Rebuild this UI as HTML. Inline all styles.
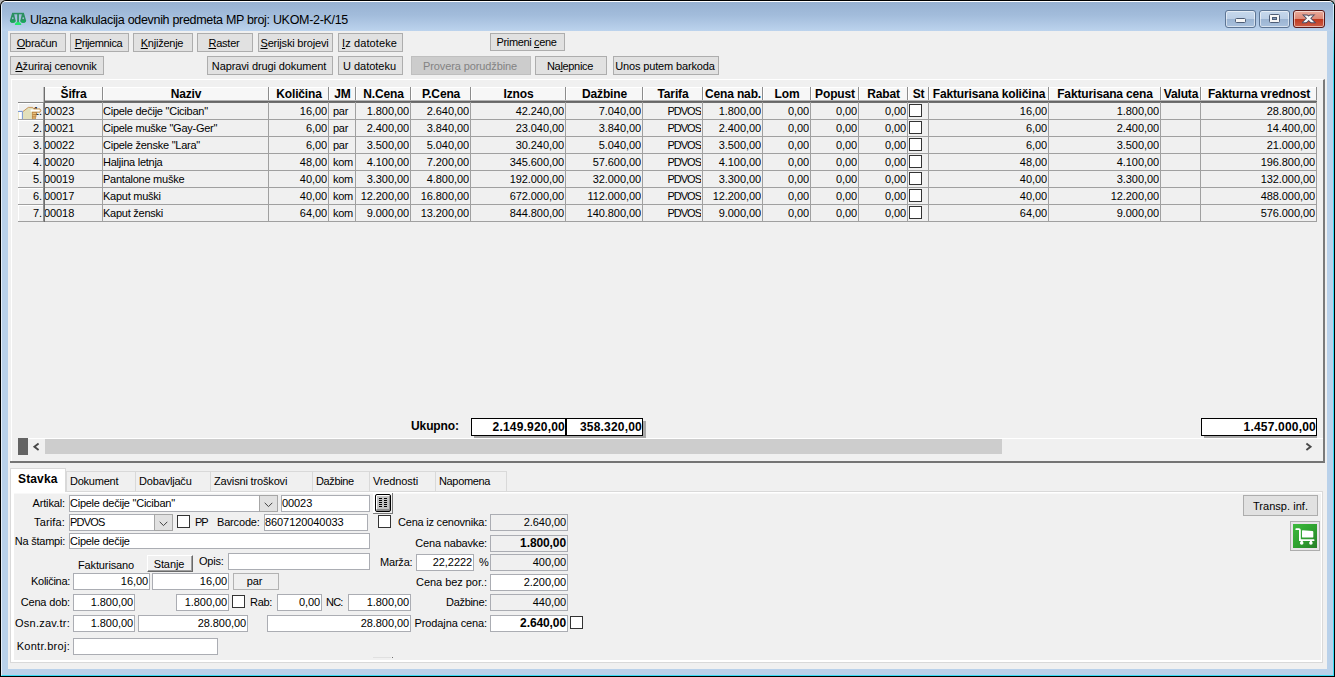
<!DOCTYPE html><html lang="sr"><head><meta charset="utf-8"><title>Ulazna kalkulacija odevnih predmeta</title><style>
*{box-sizing:border-box;margin:0;padding:0}
html,body{width:1335px;height:677px;overflow:hidden;background:#b4b4b4}
body{position:relative;font-family:"Liberation Sans",sans-serif;font-size:11px;color:#000}
.a{position:absolute;white-space:nowrap;overflow:hidden}
.t{position:absolute;white-space:nowrap;line-height:16px;height:16px;font-size:11px;letter-spacing:-0.25px}
u{text-decoration:underline;text-underline-offset:1px}
#win{left:0;top:0;width:1335px;height:677px;background:#000;border-radius:6px 6px 0 0}
#client{left:8px;top:31px;width:1319px;height:638px;background:#f0f0f0}
.btn{position:absolute;background:#e1e1e1;border:1px solid #adadad;text-align:center;white-space:nowrap;line-height:19px;height:19px;font-size:11px;letter-spacing:-0.2px;overflow:hidden;padding-right:2px}
.dis{background:#cccccc;border-color:#bfbfbf;color:#838383}
.in{position:absolute;background:#fff;border:1px solid #abadb3;white-space:nowrap;overflow:hidden;line-height:14px;height:16px;font-size:11px;letter-spacing:-0.25px;padding:0}
.ro{background:#f0f0f0}
.cb{position:absolute;width:13px;height:13px;background:#fff;border:1px solid #333}
.gl{position:absolute;background:#a0a0a0}
.hd{position:absolute;top:87px;height:14px;background:#f7f7f7;border-left:1px solid #fff;border-top:1px solid #fff;font-weight:bold;text-align:center;font-size:12px;letter-spacing:-0.15px;line-height:13px;white-space:nowrap;overflow:visible}
.cell{position:absolute;height:16px;line-height:16px;font-size:11px;white-space:nowrap;overflow:hidden;letter-spacing:-0.25px}
.tab{position:absolute;top:471px;height:20px;border:1px solid #d9d9d9;border-bottom:none;border-right:none;background:#f0f0f0;line-height:18px;font-size:11px;letter-spacing:-0.2px;padding-left:3px;white-space:nowrap}
.n{letter-spacing:-0.08px}
.r{text-align:right}
.c{text-align:center}
.b{font-weight:bold;font-size:12px;letter-spacing:-0.1px}
.in.r{padding-right:1px}
.pd{letter-spacing:-0.8px}
</style></head><body>
<div id="win" class="a">
<div class="a" style="left:1px;top:1px;width:1333px;height:675px;border-radius:5px 5px 0 0;background:#b9d1ea;border:1px solid #fff;border-left-color:#e6eff9;border-bottom-color:#38dcf5;border-right-color:#38dcf5"></div>
<div class="a" style="left:1333px;top:4px;width:1px;height:60px;background:linear-gradient(#dbeefa,#9fe3f6 40%,#38dcf5)"></div>
<div class="a" style="left:2px;top:2px;width:1331px;height:29px;border-radius:4px 4px 0 0;background:linear-gradient(#98b2d2,#a2bcdb 45%,#bcd3ed 100%)"></div>
</div>
<svg class="a" style="left:9px;top:12px" width="18" height="14" viewBox="0 0 18 14"><g fill="#2b9060"><rect x="3" y="0.8" width="12" height="1.5"/><rect x="8.2" y="1" width="1.7" height="9.6"/><path d="M3 1.2 L4.9 1.2 L6.6 8.6 Q6.6 10.7 3.8 10.7 Q0.9 10.7 0.9 8.6 Z"/><path d="M15 1.2 L13.1 1.2 L11.4 8.6 Q11.4 10.7 14.2 10.7 Q17.1 10.7 17.1 8.6 Z"/></g><path d="M1 8.4 H6.6 Q6.6 10.7 3.8 10.7 Q0.9 10.7 1 8.4Z M11.4 8.4 H17 Q17.1 10.7 14.2 10.7 Q11.4 10.7 11.4 8.4Z" fill="#1aa85a"/><ellipse cx="3.8" cy="6.2" rx="0.8" ry="1" fill="#a9c1dd"/><ellipse cx="14.2" cy="6.2" rx="0.8" ry="1" fill="#a9c1dd"/><path d="M5.9 13 Q5.9 10 9 10 Q12.3 10 12.3 13 Z" fill="#22e56c"/></svg>
<div class="t" style="left:30px;top:12px;font-size:12.5px;letter-spacing:-0.31px;line-height:16px">Ulazna kalkulacija odevnih predmeta MP broj: UKOM-2-K/15</div>
<div class="a" style="left:1225px;top:10px;width:31px;height:18px;border:1px solid #5d7594;border-radius:3px;background:linear-gradient(#c6d8ec 0%,#bccfe6 48%,#9bb4d2 52%,#a9c1dd 100%);box-shadow:inset 0 0 0 1px rgba(255,255,255,.55)">
<div class="a" style="left:9px;top:7px;width:11px;height:5px;background:#f6f6f6;border:1px solid #4d5d76;border-radius:1.5px"></div>
</div>
<div class="a" style="left:1259px;top:10px;width:31px;height:18px;border:1px solid #5d7594;border-radius:3px;background:linear-gradient(#c6d8ec 0%,#bccfe6 48%,#9bb4d2 52%,#a9c1dd 100%);box-shadow:inset 0 0 0 1px rgba(255,255,255,.55)">
<div class="a" style="left:9px;top:3px;width:11px;height:9px;background:#f6f6f6;border:1px solid #4d5d76;border-radius:1.5px"></div><div class="a" style="left:12px;top:6px;width:5px;height:3px;background:#7f97b8;border:1px solid #4d5d76"></div>
</div>
<div class="a" style="left:1293px;top:10px;width:32px;height:18px;border:1px solid #5a1a1a;border-radius:3px;background:linear-gradient(#e9aa9b 0%,#dd8a77 48%,#c0391f 52%,#cc5e47 100%);box-shadow:inset 0 0 0 1px rgba(255,255,255,.55)">
<svg class="a" style="left:8px;top:2px" width="14" height="12" viewBox="0 -1 14 12"><defs><clipPath id="cxo"><rect x="0" y="0.5" width="14" height="8.7"/></clipPath><clipPath id="cxi"><rect x="0" y="1.4" width="14" height="6.9"/></clipPath></defs><g fill="none"><path clip-path="url(#cxo)" d="M0.6 -1.8 L12.7 10.4 M12.7 -1.8 L0.6 10.4" stroke="#4a4a60" stroke-width="4"/><path clip-path="url(#cxi)" d="M0.6 -1.8 L12.7 10.4 M12.7 -1.8 L0.6 10.4" stroke="#f8f8f8" stroke-width="2.3"/></g></svg>
</div>
<div id="client" class="a"></div>
<div class="btn " style="left:10px;top:33px;width:56px;letter-spacing:-0.26px;"><u>O</u>bračun</div>
<div class="btn " style="left:70px;top:33px;width:59px;letter-spacing:-0.38px;"><u>P</u>rijemnica</div>
<div class="btn " style="left:133px;top:33px;width:60px;letter-spacing:-0.24px;"><u>K</u>njiženje</div>
<div class="btn " style="left:197px;top:33px;width:56px;letter-spacing:-0.23px;"><u>R</u>aster</div>
<div class="btn " style="left:258px;top:33px;width:75px;letter-spacing:-0.18px;"><u>S</u>erijski brojevi</div>
<div class="btn " style="left:338px;top:33px;width:65px;letter-spacing:0.11px;"><u>I</u>z datoteke</div>
<div class="btn " style="left:490px;top:33px;width:75px;height:18px;line-height:17px;letter-spacing:-0.35px;">Primeni <u>c</u>ene</div>
<div class="btn " style="left:10px;top:56px;width:94px;letter-spacing:-0.15px;"><u>A</u>žuriraj cenovnik</div>
<div class="btn " style="left:207px;top:56px;width:126px;letter-spacing:-0.11px;">Napravi drugi dokument</div>
<div class="btn " style="left:338px;top:56px;width:65px;letter-spacing:-0.02px;">U datoteku</div>
<div class="btn dis" style="left:411px;top:56px;width:120px;letter-spacing:-0.11px;">Provera porudžbine</div>
<div class="btn " style="left:535px;top:56px;width:72px;letter-spacing:-0.32px;">Na<u>l</u>epnice</div>
<div class="btn " style="left:613px;top:56px;width:106px;letter-spacing:-0.14px;">Unos putem barkoda</div>
<div class="a" style="left:10px;top:79px;width:1315px;height:384px;border-top:1px solid #fff;border-right:2px solid #7a7a7a;border-bottom:2px solid #747474"></div>
<div class="a" style="left:11px;top:79px;width:1px;height:382px;background:#fff"></div>
<div class="a" style="left:10px;top:79px;width:1px;height:382px;background:#f0f0f0"></div>
<div class="hd" style="left:44px;width:58px">Šifra</div>
<div class="gl" style="left:102px;top:87px;width:1px;height:15px;background:#8c8c8c"></div>
<div class="hd" style="left:103px;width:165px">Naziv</div>
<div class="gl" style="left:268px;top:87px;width:1px;height:15px;background:#8c8c8c"></div>
<div class="hd" style="left:269px;width:59px">Količina</div>
<div class="gl" style="left:328px;top:87px;width:1px;height:15px;background:#8c8c8c"></div>
<div class="hd" style="left:329px;width:26px">JM</div>
<div class="gl" style="left:355px;top:87px;width:1px;height:15px;background:#8c8c8c"></div>
<div class="hd" style="left:356px;width:54px">N.Cena</div>
<div class="gl" style="left:410px;top:87px;width:1px;height:15px;background:#8c8c8c"></div>
<div class="hd" style="left:411px;width:59px">P.Cena</div>
<div class="gl" style="left:470px;top:87px;width:1px;height:15px;background:#8c8c8c"></div>
<div class="hd" style="left:471px;width:94px">Iznos</div>
<div class="gl" style="left:565px;top:87px;width:1px;height:15px;background:#8c8c8c"></div>
<div class="hd" style="left:566px;width:76px">Dažbine</div>
<div class="gl" style="left:642px;top:87px;width:1px;height:15px;background:#8c8c8c"></div>
<div class="hd" style="left:643px;width:59px">Tarifa</div>
<div class="gl" style="left:702px;top:87px;width:1px;height:15px;background:#8c8c8c"></div>
<div class="hd" style="left:703px;width:59px">Cena nab.</div>
<div class="gl" style="left:762px;top:87px;width:1px;height:15px;background:#8c8c8c"></div>
<div class="hd" style="left:763px;width:47px">Lom</div>
<div class="gl" style="left:810px;top:87px;width:1px;height:15px;background:#8c8c8c"></div>
<div class="hd" style="left:811px;width:47px">Popust</div>
<div class="gl" style="left:858px;top:87px;width:1px;height:15px;background:#8c8c8c"></div>
<div class="hd" style="left:859px;width:48px">Rabat</div>
<div class="gl" style="left:907px;top:87px;width:1px;height:15px;background:#8c8c8c"></div>
<div class="hd" style="left:908px;width:20px">St</div>
<div class="gl" style="left:928px;top:87px;width:1px;height:15px;background:#8c8c8c"></div>
<div class="hd" style="left:929px;width:119px">Fakturisana količina</div>
<div class="gl" style="left:1048px;top:87px;width:1px;height:15px;background:#8c8c8c"></div>
<div class="hd" style="left:1049px;width:111px">Fakturisana cena</div>
<div class="gl" style="left:1160px;top:87px;width:1px;height:15px;background:#8c8c8c"></div>
<div class="hd" style="left:1161px;width:39px">Valuta</div>
<div class="gl" style="left:1200px;top:87px;width:1px;height:15px;background:#8c8c8c"></div>
<div class="hd" style="left:1201px;width:115px">Fakturna vrednost</div>
<div class="gl" style="left:1316px;top:87px;width:1px;height:15px;background:#8c8c8c"></div>
<div class="gl" style="left:44px;top:100px;width:1273px;height:1px;background:#b4b4b4"></div>
<div class="gl" style="left:44px;top:101px;width:1273px;height:1px;background:#666"></div>
<div class="gl" style="left:18px;top:102px;width:26px;height:1px;background:#8a8a8a"></div>
<div class="gl" style="left:44px;top:102px;width:1273px;height:1px;background:#707070"></div>
<div class="cell n r" style="left:18px;top:103px;width:24px">1.</div>
<div class="gl" style="left:18px;top:103px;width:25px;height:1px;background:#fff"></div><div class="gl" style="left:18px;top:103px;width:1px;height:16px;background:#fff"></div>
<div class="cell n" style="left:44px;top:103px;width:58px">00023</div>
<div class="cell" style="left:103px;top:103px;width:165px">Cipele dečije "Ciciban"</div>
<div class="cell n r" style="left:269px;top:103px;width:58px;">16,00</div>
<div class="cell" style="left:333px;top:103px;width:22px">par</div>
<div class="cell n r" style="left:356px;top:103px;width:53px;">1.800,00</div>
<div class="cell n r" style="left:411px;top:103px;width:58px;">2.640,00</div>
<div class="cell n r" style="left:471px;top:103px;width:93px;">42.240,00</div>
<div class="cell n r" style="left:566px;top:103px;width:75px;">7.040,00</div>
<div class="cell r" style="left:643px;top:103px;width:58px;letter-spacing:-1px;">PDVOS</div>
<div class="cell n r" style="left:703px;top:103px;width:58px;">1.800,00</div>
<div class="cell n r" style="left:763px;top:103px;width:46px;">0,00</div>
<div class="cell n r" style="left:811px;top:103px;width:46px;">0,00</div>
<div class="cell n r" style="left:859px;top:103px;width:47px;">0,00</div>
<div class="cb" style="left:909px;top:104px;width:13px;height:13px;border-color:#333"></div>
<div class="cell n r" style="left:929px;top:103px;width:118px;">16,00</div>
<div class="cell n r" style="left:1049px;top:103px;width:110px;">1.800,00</div>
<div class="cell n r" style="left:1201px;top:103px;width:114px;">28.800,00</div>
<div class="gl" style="left:18px;top:119px;width:1299px;height:1px"></div>
<div class="cell n r" style="left:18px;top:120px;width:24px">2.</div>
<div class="gl" style="left:18px;top:120px;width:25px;height:1px;background:#fff"></div><div class="gl" style="left:18px;top:120px;width:1px;height:16px;background:#fff"></div>
<div class="cell n" style="left:44px;top:120px;width:58px">00021</div>
<div class="cell" style="left:103px;top:120px;width:165px">Cipele muške "Gay-Ger"</div>
<div class="cell n r" style="left:269px;top:120px;width:58px;">6,00</div>
<div class="cell" style="left:333px;top:120px;width:22px">par</div>
<div class="cell n r" style="left:356px;top:120px;width:53px;">2.400,00</div>
<div class="cell n r" style="left:411px;top:120px;width:58px;">3.840,00</div>
<div class="cell n r" style="left:471px;top:120px;width:93px;">23.040,00</div>
<div class="cell n r" style="left:566px;top:120px;width:75px;">3.840,00</div>
<div class="cell r" style="left:643px;top:120px;width:58px;letter-spacing:-1px;">PDVOS</div>
<div class="cell n r" style="left:703px;top:120px;width:58px;">2.400,00</div>
<div class="cell n r" style="left:763px;top:120px;width:46px;">0,00</div>
<div class="cell n r" style="left:811px;top:120px;width:46px;">0,00</div>
<div class="cell n r" style="left:859px;top:120px;width:47px;">0,00</div>
<div class="cb" style="left:909px;top:121px;width:13px;height:13px;border-color:#333"></div>
<div class="cell n r" style="left:929px;top:120px;width:118px;">6,00</div>
<div class="cell n r" style="left:1049px;top:120px;width:110px;">2.400,00</div>
<div class="cell n r" style="left:1201px;top:120px;width:114px;">14.400,00</div>
<div class="gl" style="left:18px;top:136px;width:1299px;height:1px"></div>
<div class="cell n r" style="left:18px;top:137px;width:24px">3.</div>
<div class="gl" style="left:18px;top:137px;width:25px;height:1px;background:#fff"></div><div class="gl" style="left:18px;top:137px;width:1px;height:16px;background:#fff"></div>
<div class="cell n" style="left:44px;top:137px;width:58px">00022</div>
<div class="cell" style="left:103px;top:137px;width:165px">Cipele ženske "Lara"</div>
<div class="cell n r" style="left:269px;top:137px;width:58px;">6,00</div>
<div class="cell" style="left:333px;top:137px;width:22px">par</div>
<div class="cell n r" style="left:356px;top:137px;width:53px;">3.500,00</div>
<div class="cell n r" style="left:411px;top:137px;width:58px;">5.040,00</div>
<div class="cell n r" style="left:471px;top:137px;width:93px;">30.240,00</div>
<div class="cell n r" style="left:566px;top:137px;width:75px;">5.040,00</div>
<div class="cell r" style="left:643px;top:137px;width:58px;letter-spacing:-1px;">PDVOS</div>
<div class="cell n r" style="left:703px;top:137px;width:58px;">3.500,00</div>
<div class="cell n r" style="left:763px;top:137px;width:46px;">0,00</div>
<div class="cell n r" style="left:811px;top:137px;width:46px;">0,00</div>
<div class="cell n r" style="left:859px;top:137px;width:47px;">0,00</div>
<div class="cb" style="left:909px;top:138px;width:13px;height:13px;border-color:#333"></div>
<div class="cell n r" style="left:929px;top:137px;width:118px;">6,00</div>
<div class="cell n r" style="left:1049px;top:137px;width:110px;">3.500,00</div>
<div class="cell n r" style="left:1201px;top:137px;width:114px;">21.000,00</div>
<div class="gl" style="left:18px;top:153px;width:1299px;height:1px"></div>
<div class="cell n r" style="left:18px;top:154px;width:24px">4.</div>
<div class="gl" style="left:18px;top:154px;width:25px;height:1px;background:#fff"></div><div class="gl" style="left:18px;top:154px;width:1px;height:16px;background:#fff"></div>
<div class="cell n" style="left:44px;top:154px;width:58px">00020</div>
<div class="cell" style="left:103px;top:154px;width:165px">Haljina letnja</div>
<div class="cell n r" style="left:269px;top:154px;width:58px;">48,00</div>
<div class="cell" style="left:333px;top:154px;width:22px">kom</div>
<div class="cell n r" style="left:356px;top:154px;width:53px;">4.100,00</div>
<div class="cell n r" style="left:411px;top:154px;width:58px;">7.200,00</div>
<div class="cell n r" style="left:471px;top:154px;width:93px;">345.600,00</div>
<div class="cell n r" style="left:566px;top:154px;width:75px;">57.600,00</div>
<div class="cell r" style="left:643px;top:154px;width:58px;letter-spacing:-1px;">PDVOS</div>
<div class="cell n r" style="left:703px;top:154px;width:58px;">4.100,00</div>
<div class="cell n r" style="left:763px;top:154px;width:46px;">0,00</div>
<div class="cell n r" style="left:811px;top:154px;width:46px;">0,00</div>
<div class="cell n r" style="left:859px;top:154px;width:47px;">0,00</div>
<div class="cb" style="left:909px;top:155px;width:13px;height:13px;border-color:#333"></div>
<div class="cell n r" style="left:929px;top:154px;width:118px;">48,00</div>
<div class="cell n r" style="left:1049px;top:154px;width:110px;">4.100,00</div>
<div class="cell n r" style="left:1201px;top:154px;width:114px;">196.800,00</div>
<div class="gl" style="left:18px;top:170px;width:1299px;height:1px"></div>
<div class="cell n r" style="left:18px;top:171px;width:24px">5.</div>
<div class="gl" style="left:18px;top:171px;width:25px;height:1px;background:#fff"></div><div class="gl" style="left:18px;top:171px;width:1px;height:16px;background:#fff"></div>
<div class="cell n" style="left:44px;top:171px;width:58px">00019</div>
<div class="cell" style="left:103px;top:171px;width:165px">Pantalone muške</div>
<div class="cell n r" style="left:269px;top:171px;width:58px;">40,00</div>
<div class="cell" style="left:333px;top:171px;width:22px">kom</div>
<div class="cell n r" style="left:356px;top:171px;width:53px;">3.300,00</div>
<div class="cell n r" style="left:411px;top:171px;width:58px;">4.800,00</div>
<div class="cell n r" style="left:471px;top:171px;width:93px;">192.000,00</div>
<div class="cell n r" style="left:566px;top:171px;width:75px;">32.000,00</div>
<div class="cell r" style="left:643px;top:171px;width:58px;letter-spacing:-1px;">PDVOS</div>
<div class="cell n r" style="left:703px;top:171px;width:58px;">3.300,00</div>
<div class="cell n r" style="left:763px;top:171px;width:46px;">0,00</div>
<div class="cell n r" style="left:811px;top:171px;width:46px;">0,00</div>
<div class="cell n r" style="left:859px;top:171px;width:47px;">0,00</div>
<div class="cb" style="left:909px;top:172px;width:13px;height:13px;border-color:#333"></div>
<div class="cell n r" style="left:929px;top:171px;width:118px;">40,00</div>
<div class="cell n r" style="left:1049px;top:171px;width:110px;">3.300,00</div>
<div class="cell n r" style="left:1201px;top:171px;width:114px;">132.000,00</div>
<div class="gl" style="left:18px;top:187px;width:1299px;height:1px"></div>
<div class="cell n r" style="left:18px;top:188px;width:24px">6.</div>
<div class="gl" style="left:18px;top:188px;width:25px;height:1px;background:#fff"></div><div class="gl" style="left:18px;top:188px;width:1px;height:16px;background:#fff"></div>
<div class="cell n" style="left:44px;top:188px;width:58px">00017</div>
<div class="cell" style="left:103px;top:188px;width:165px">Kaput muški</div>
<div class="cell n r" style="left:269px;top:188px;width:58px;">40,00</div>
<div class="cell" style="left:333px;top:188px;width:22px">kom</div>
<div class="cell n r" style="left:356px;top:188px;width:53px;">12.200,00</div>
<div class="cell n r" style="left:411px;top:188px;width:58px;">16.800,00</div>
<div class="cell n r" style="left:471px;top:188px;width:93px;">672.000,00</div>
<div class="cell n r" style="left:566px;top:188px;width:75px;">112.000,00</div>
<div class="cell r" style="left:643px;top:188px;width:58px;letter-spacing:-1px;">PDVOS</div>
<div class="cell n r" style="left:703px;top:188px;width:58px;">12.200,00</div>
<div class="cell n r" style="left:763px;top:188px;width:46px;">0,00</div>
<div class="cell n r" style="left:811px;top:188px;width:46px;">0,00</div>
<div class="cell n r" style="left:859px;top:188px;width:47px;">0,00</div>
<div class="cb" style="left:909px;top:189px;width:13px;height:13px;border-color:#333"></div>
<div class="cell n r" style="left:929px;top:188px;width:118px;">40,00</div>
<div class="cell n r" style="left:1049px;top:188px;width:110px;">12.200,00</div>
<div class="cell n r" style="left:1201px;top:188px;width:114px;">488.000,00</div>
<div class="gl" style="left:18px;top:204px;width:1299px;height:1px"></div>
<div class="cell n r" style="left:18px;top:205px;width:24px">7.</div>
<div class="gl" style="left:18px;top:205px;width:25px;height:1px;background:#fff"></div><div class="gl" style="left:18px;top:205px;width:1px;height:16px;background:#fff"></div>
<div class="cell n" style="left:44px;top:205px;width:58px">00018</div>
<div class="cell" style="left:103px;top:205px;width:165px">Kaput ženski</div>
<div class="cell n r" style="left:269px;top:205px;width:58px;">64,00</div>
<div class="cell" style="left:333px;top:205px;width:22px">kom</div>
<div class="cell n r" style="left:356px;top:205px;width:53px;">9.000,00</div>
<div class="cell n r" style="left:411px;top:205px;width:58px;">13.200,00</div>
<div class="cell n r" style="left:471px;top:205px;width:93px;">844.800,00</div>
<div class="cell n r" style="left:566px;top:205px;width:75px;">140.800,00</div>
<div class="cell r" style="left:643px;top:205px;width:58px;letter-spacing:-1px;">PDVOS</div>
<div class="cell n r" style="left:703px;top:205px;width:58px;">9.000,00</div>
<div class="cell n r" style="left:763px;top:205px;width:46px;">0,00</div>
<div class="cell n r" style="left:811px;top:205px;width:46px;">0,00</div>
<div class="cell n r" style="left:859px;top:205px;width:47px;">0,00</div>
<div class="cb" style="left:909px;top:206px;width:13px;height:13px;border-color:#333"></div>
<div class="cell n r" style="left:929px;top:205px;width:118px;">64,00</div>
<div class="cell n r" style="left:1049px;top:205px;width:110px;">9.000,00</div>
<div class="cell n r" style="left:1201px;top:205px;width:114px;">576.000,00</div>
<div class="gl" style="left:18px;top:221px;width:1299px;height:1px"></div>
<div class="gl" style="left:43px;top:87px;width:1px;height:15px;background:#bdbdbd"></div>
<div class="gl" style="left:43px;top:102px;width:1px;height:120px;background:#8e8e8e"></div>
<div class="gl" style="left:44px;top:87px;width:1px;height:135px;background:#6e6e6e"></div>
<div class="gl" style="left:102px;top:102px;width:1px;height:120px"></div>
<div class="gl" style="left:268px;top:102px;width:1px;height:120px"></div>
<div class="gl" style="left:328px;top:102px;width:1px;height:120px"></div>
<div class="gl" style="left:355px;top:102px;width:1px;height:120px"></div>
<div class="gl" style="left:410px;top:102px;width:1px;height:120px"></div>
<div class="gl" style="left:470px;top:102px;width:1px;height:120px"></div>
<div class="gl" style="left:565px;top:102px;width:1px;height:120px"></div>
<div class="gl" style="left:642px;top:102px;width:1px;height:120px"></div>
<div class="gl" style="left:702px;top:102px;width:1px;height:120px"></div>
<div class="gl" style="left:762px;top:102px;width:1px;height:120px"></div>
<div class="gl" style="left:810px;top:102px;width:1px;height:120px"></div>
<div class="gl" style="left:858px;top:102px;width:1px;height:120px"></div>
<div class="gl" style="left:907px;top:102px;width:1px;height:120px"></div>
<div class="gl" style="left:928px;top:102px;width:1px;height:120px"></div>
<div class="gl" style="left:1048px;top:102px;width:1px;height:120px"></div>
<div class="gl" style="left:1160px;top:102px;width:1px;height:120px"></div>
<div class="gl" style="left:1200px;top:102px;width:1px;height:120px"></div>
<div class="gl" style="left:1316px;top:102px;width:1px;height:120px"></div>
<svg class="a" style="left:18px;top:104px" width="26" height="15" viewBox="0 0 26 15"><rect x="0" y="7.4" width="4.4" height="7.6" fill="#fff"/><rect x="0" y="7.9" width="1" height="7.1" fill="#ebe7c6"/><path d="M0 7.4 H4.4 V15" fill="none" stroke="#6a8fd0" stroke-width="1"/><path d="M4.9 7.6 L10.3 3.4 H14.8 L15.6 4.9 H22 Q23.5 6.5 22 8.2 H14.4 V15 H4.9 Z" fill="#e2e0bb"/><rect x="12.6" y="5.4" width="9" height="2.2" fill="#fff"/><path d="M4.9 7.6 L10.3 3.4 H14.8 L15.6 4.9 H22 Q23.6 6.5 22 8.2 H14.2" fill="none" stroke="#c48c4c" stroke-width="0.9"/><g fill="#e9c27c" stroke="#b9813d" stroke-width="0.7"><rect x="14.3" y="8.5" width="4.2" height="2"/><rect x="14.3" y="10.8" width="3.7" height="2"/><rect x="14.3" y="13.1" width="3.2" height="1.9"/></g></svg>
<div class="t b" style="left:411px;top:418px">Ukupno:</div>
<div class="a" style="left:474px;top:421px;width:95px;height:17px;background:#a8a8a8"></div>
<div class="a b r" style="left:471px;top:418px;width:95px;height:18px;background:#fff;border:1px solid #000;line-height:17px;font-size:12px;letter-spacing:0.2px;padding-right:0">2.149.920,00</div>
<div class="a" style="left:569px;top:421px;width:77px;height:17px;background:#a8a8a8"></div>
<div class="a b r" style="left:566px;top:418px;width:77px;height:18px;background:#fff;border:1px solid #000;line-height:17px;font-size:12px;letter-spacing:0.2px;padding-right:0">358.320,00</div>
<div class="a" style="left:1204px;top:421px;width:113px;height:17px;background:#a8a8a8"></div>
<div class="a b r" style="left:1201px;top:418px;width:116px;height:18px;background:#fff;border:1px solid #000;line-height:17px;font-size:12px;letter-spacing:0.2px;padding-right:0">1.457.000,00</div>
<div class="a" style="left:28px;top:438px;width:1295px;height:1px;background:#fff"></div>
<div class="a" style="left:18px;top:438px;width:10px;height:17px;background:#646464"></div>
<div class="a" style="left:45px;top:439px;width:957px;height:15px;background:#cdcdcd"></div>
<svg class="a" style="left:32px;top:442px" width="8" height="10" viewBox="0 0 8 10"><path d="M6.6 1.4 L2.4 4.7 L6.6 8" fill="none" stroke="#484848" stroke-width="1.9"/></svg>
<svg class="a" style="left:1305px;top:442px" width="8" height="10" viewBox="0 0 8 10"><path d="M1.4 1.4 L5.6 4.7 L1.4 8" fill="none" stroke="#484848" stroke-width="1.9"/></svg>
<div class="a" style="left:10px;top:491px;width:1313px;height:172px;border:1px solid #d9d9d9;background:#fff"></div>
<div class="a" style="left:14px;top:493px;width:1307px;height:167px;background:#f0f0f0;border-top:1px solid #f8f8f8"></div>
<div class="tab" style="left:66px;width:69px;letter-spacing:-0.23px;">Dokument</div>
<div class="tab" style="left:135px;width:75px;letter-spacing:-0.18px;">Dobavljaču</div>
<div class="tab" style="left:210px;width:102px;letter-spacing:-0.16px;">Zavisni troškovi</div>
<div class="tab" style="left:312px;width:57px;letter-spacing:-0.38px;">Dažbine</div>
<div class="tab" style="left:369px;width:66px;letter-spacing:-0.12px;">Vrednosti</div>
<div class="tab" style="left:435px;width:72px;letter-spacing:-0.35px;">Napomena</div>
<div class="a" style="left:506px;top:471px;width:1px;height:20px;background:#d9d9d9"></div>
<div class="a b" style="left:10px;top:468px;width:56px;height:24px;border:1px solid #d9d9d9;border-bottom:none;background:#fff;line-height:20px;padding-left:7px;font-size:12px;letter-spacing:0.15px">Stavka</div>
<div class="t r " style="left:-65px;top:495px;width:130px;letter-spacing:-0.13px;">Artikal:</div>
<div class="in " style="left:69px;top:495px;width:209px;height:17px;line-height:15px">Cipele dečije "Ciciban"</div>
<div class="a" style="left:259px;top:495px;width:19px;height:17px;background:#e1e1e1;border:1px solid #a6a6a6"><svg style="position:absolute;left:4px;top:6px" width="9" height="6" viewBox="0 0 9 6"><path d="M0.7 0.8 L4.5 4.6 L8.3 0.8" fill="none" stroke="#404040" stroke-width="1"/></svg></div>
<div class="in n" style="left:281px;top:495px;width:89px;height:17px;line-height:15px">00023</div>
<svg class="a" style="left:373px;top:492px" width="21" height="23" viewBox="0 0 21 23" shape-rendering="crispEdges"><rect x="0" y="1" width="20" height="1" fill="#fff"/><rect x="0" y="1" width="2" height="20" fill="#fff"/><rect x="19" y="1" width="1" height="21" fill="#7a7a7a"/><rect x="0" y="21" width="20" height="1" fill="#7a7a7a"/><rect x="3" y="3" width="14" height="16" fill="#c3c3c3"/><rect x="3" y="3" width="14" height="1" fill="#fff"/><rect x="3" y="3" width="1" height="14" fill="#fff"/><rect x="4" y="17" width="13" height="2" fill="#8e8e8e"/><rect x="16" y="4" width="1" height="15" fill="#8e8e8e"/><rect x="2.5" y="2.5" width="15" height="17" rx="1.5" fill="none" stroke="#000" stroke-width="1" shape-rendering="auto"/><g fill="#000"><rect x="6" y="6" width="3" height="1"/><rect x="11" y="6" width="3" height="1"/><rect x="6" y="8" width="3" height="1"/><rect x="11" y="8" width="3" height="1"/><rect x="6" y="10" width="3" height="1"/><rect x="11" y="10" width="3" height="1"/><rect x="6" y="12" width="3" height="1"/><rect x="11" y="12" width="3" height="1"/><rect x="6" y="14" width="3" height="1"/><rect x="11" y="14" width="3" height="1"/></g></svg>
<div class="t r " style="left:-65px;top:514px;width:130px;letter-spacing:0.15px;">Tarifa:</div>
<div class="in pd" style="left:69px;top:514px;width:104px;height:17px;line-height:15px">PDVOS</div>
<div class="a" style="left:154px;top:514px;width:19px;height:17px;background:#e1e1e1;border:1px solid #a6a6a6"><svg style="position:absolute;left:4px;top:6px" width="9" height="6" viewBox="0 0 9 6"><path d="M0.7 0.8 L4.5 4.6 L8.3 0.8" fill="none" stroke="#404040" stroke-width="1"/></svg></div>
<div class="cb" style="left:177px;top:515px"></div>
<div class="t " style="left:195px;top:514px;letter-spacing:-1.19px;">PP</div>
<div class="t " style="left:217px;top:514px;letter-spacing:-0.17px;">Barcode:</div>
<div class="in n" style="left:264px;top:514px;width:104px;height:17px;line-height:15px">8607120040033</div>
<div class="cb" style="left:378px;top:515px"></div>
<div class="t r " style="left:357px;top:514px;width:130px;letter-spacing:-0.22px;">Cena iz cenovnika:</div>
<div class="in ro r n" style="left:490px;top:514px;width:78px;height:17px;line-height:15px">2.640,00</div>
<div class="t r " style="left:-65px;top:533px;width:130px;letter-spacing:-0.23px;">Na štampi:</div>
<div class="in " style="left:69px;top:533px;width:301px;height:16px;line-height:14px">Cipele dečije</div>
<div class="t r " style="left:357px;top:535px;width:130px;letter-spacing:-0.18px;">Cena nabavke:</div>
<div class="in ro r b" style="left:490px;top:535px;width:78px;height:17px;line-height:15px">1.800,00</div>
<div class="t " style="left:78px;top:557px;letter-spacing:-0.13px;">Fakturisano</div>
<div class="btn" style="left:147px;top:555px;width:46px;height:17px;line-height:17px;background:#f0f0f0;border-color:#fff #696969 #696969 #fff;box-shadow:inset -1px -1px 0 #a0a0a0;padding-right:2px;letter-spacing:-0.08px;">Stanje</div>
<div class="t " style="left:199px;top:553px;letter-spacing:-0.19px;">Opis:</div>
<div class="in " style="left:228px;top:553px;width:142px;height:17px;line-height:15px"></div>
<div class="t " style="left:380px;top:554px;letter-spacing:-0.19px;">Marža:</div>
<div class="in r n" style="left:416px;top:554px;width:58px;height:17px;line-height:15px">22,2222</div>
<div class="t " style="left:479px;top:554px;">%</div>
<div class="in ro r n" style="left:490px;top:554px;width:78px;height:17px;line-height:15px">400,00</div>
<div class="t r " style="left:-60px;top:573px;width:130px;letter-spacing:-0.29px;">Količina:</div>
<div class="in r n" style="left:73px;top:573px;width:77px;height:17px;line-height:15px">16,00</div>
<div class="in r n" style="left:152px;top:573px;width:77px;height:17px;line-height:15px">16,00</div>
<div class="btn" style="left:233px;top:573px;width:46px;height:17px;line-height:15px;background:#efefef;border-color:#b2b2b2;padding-right:3px">par</div>
<div class="t r " style="left:357px;top:574px;width:130px;letter-spacing:-0.04px;">Cena bez por.:</div>
<div class="in r n" style="left:490px;top:574px;width:78px;height:17px;line-height:15px">2.200,00</div>
<div class="t r " style="left:-60px;top:594px;width:130px;letter-spacing:-0.16px;">Cena dob:</div>
<div class="in r n" style="left:73px;top:594px;width:62px;height:17px;line-height:15px">1.800,00</div>
<div class="in r n" style="left:176px;top:594px;width:53px;height:17px;line-height:15px">1.800,00</div>
<div class="cb" style="left:232px;top:595px"></div>
<div class="t " style="left:250px;top:594px;letter-spacing:-0.31px;">Rab:</div>
<div class="in r n" style="left:277px;top:594px;width:45px;height:17px;line-height:15px">0,00</div>
<div class="t " style="left:326px;top:594px;letter-spacing:-0.78px;">NC:</div>
<div class="in r n" style="left:348px;top:594px;width:63px;height:17px;line-height:15px">1.800,00</div>
<div class="t r " style="left:357px;top:594px;width:130px;letter-spacing:-0.30px;">Dažbine:</div>
<div class="in ro r n" style="left:490px;top:594px;width:78px;height:17px;line-height:15px">440,00</div>
<div class="t r " style="left:-60px;top:615px;width:130px;letter-spacing:0.24px;">Osn.zav.tr:</div>
<div class="in r n" style="left:73px;top:615px;width:62px;height:17px;line-height:15px">1.800,00</div>
<div class="in r n" style="left:138px;top:615px;width:110px;height:17px;line-height:15px">28.800,00</div>
<div class="in r n" style="left:267px;top:615px;width:144px;height:17px;line-height:15px">28.800,00</div>
<div class="t r " style="left:357px;top:615px;width:130px;letter-spacing:-0.11px;">Prodajna cena:</div>
<div class="in r b" style="left:490px;top:615px;width:78px;height:17px;line-height:15px">2.640,00</div>
<div class="cb" style="left:570px;top:616px"></div>
<div class="t r " style="left:-60px;top:638px;width:130px;letter-spacing:0.29px;">Kontr.broj:</div>
<div class="in " style="left:73px;top:638px;width:145px;height:17px;line-height:15px"></div>
<div class="a" style="left:373px;top:657px;width:18px;height:1px;background:#e0e0e0"></div>
<div class="a" style="left:392px;top:657px;width:1px;height:1px;background:#707070"></div>
<div class="btn" style="left:1243px;top:495px;width:75px;height:21px;line-height:21px;font-size:11px;padding-right:0;letter-spacing:0.03px;">Transp. inf.</div>
<div class="a" style="left:1290px;top:521px;width:30px;height:30px;background:#e9e4e9;border:1px solid #adadad"><div style="position:absolute;left:2px;top:2px;width:24px;height:24px;background:linear-gradient(135deg,#3dba3d,#2f9f30 55%,#277f28)"><svg style="position:absolute;left:0;top:0" width="24" height="24" viewBox="0 0 24 24"><path d="M3.3 5.2 H6 Q6.9 5.2 6.9 6.1 V16.2 H20.6" fill="none" stroke="#fff" stroke-width="1.8" stroke-linecap="round"/><path d="M9.6 6.3 L19.4 7 Q20.3 7.1 20.3 8 V12.7 Q20.3 13.6 19.4 13.6 H9.9 Q9 13.6 9 12.7 V6.9 Q9 6.3 9.6 6.3Z" fill="#fff"/><rect x="7.8" y="16.5" width="1.9" height="2" fill="#fff"/><rect x="17" y="16.5" width="1.9" height="2" fill="#fff"/><circle cx="8.7" cy="19" r="1.8" fill="#fff"/><circle cx="17.9" cy="19" r="1.8" fill="#fff"/></svg></div></div>
</body></html>
